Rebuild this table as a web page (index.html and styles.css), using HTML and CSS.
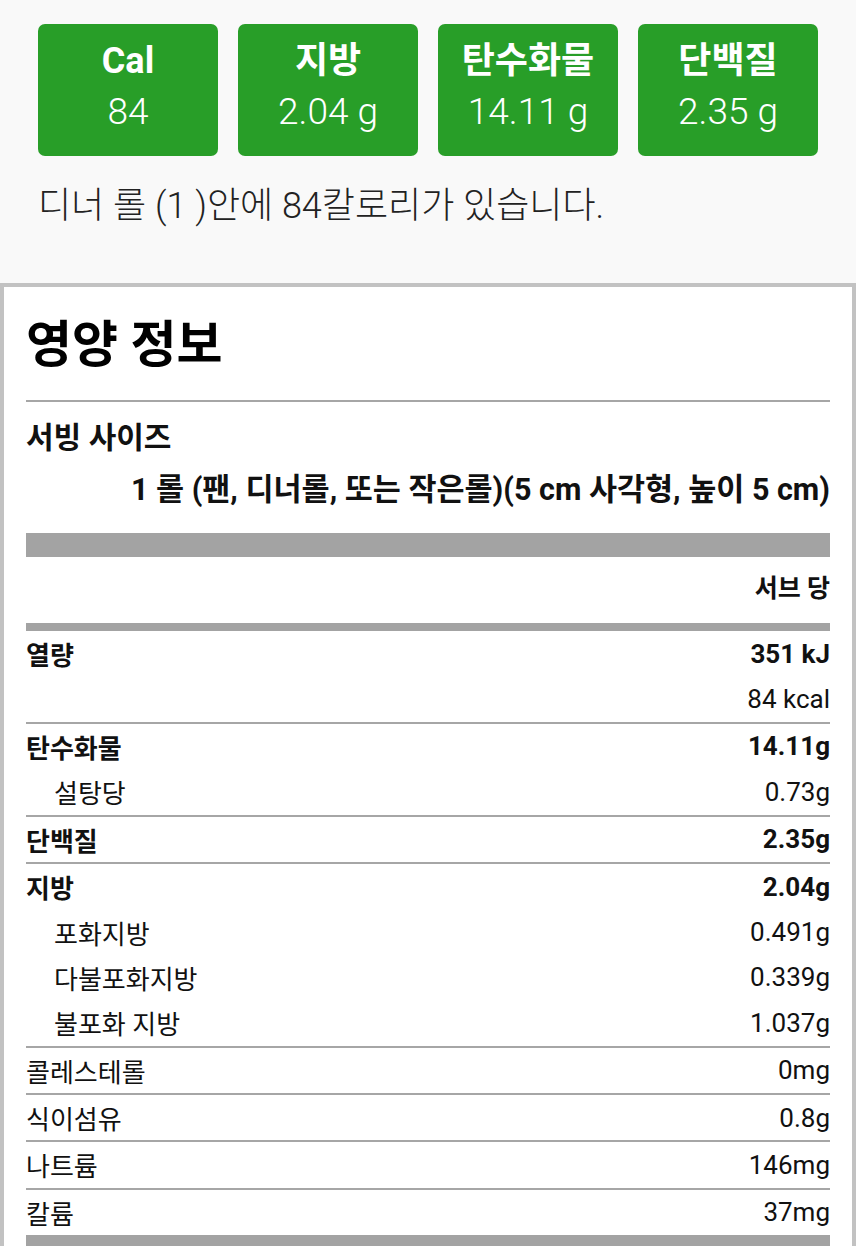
FILE: index.html
```html
<!DOCTYPE html>
<html lang="ko">
<head>
<meta charset="utf-8">
<link rel="stylesheet" href="styles.css">
</head>
<body>
<div class="top">
  <div class="cards">
    <div class="card"><div class="c-title">Cal</div><div class="c-val">84</div></div>
    <div class="card"><div class="c-title">지방</div><div class="c-val">2.04 g</div></div>
    <div class="card"><div class="c-title">탄수화물</div><div class="c-val">14.11 g</div></div>
    <div class="card"><div class="c-title">단백질</div><div class="c-val">2.35 g</div></div>
  </div>
  <p class="summary">디너 롤 (1 )안에 84칼로리가 있습니다.</p>
</div>
<div class="facts">
  <h1 class="f-title">영양 정보</h1>
  <div class="hr"></div>
  <div class="serving-label">서빙 사이즈</div>
  <div class="serving-val">1 롤 (팬, 디너롤, 또는 작은롤)(5 cm 사각형, 높이 5 cm)</div>
  <div class="bar thick"></div>
  <div class="per">서브 당</div>
  <div class="bar mid"></div>
  <div class="row b"><span>열량</span><span>351 kJ</span></div>
  <div class="row"><span></span><span>84 kcal</span></div>
  <div class="hr"></div>
  <div class="row b"><span>탄수화물</span><span>14.11g</span></div>
  <div class="row sub"><span>설탕당</span><span>0.73g</span></div>
  <div class="hr"></div>
  <div class="row b"><span>단백질</span><span>2.35g</span></div>
  <div class="hr"></div>
  <div class="row b"><span>지방</span><span>2.04g</span></div>
  <div class="row sub"><span>포화지방</span><span>0.491g</span></div>
  <div class="row sub"><span>다불포화지방</span><span>0.339g</span></div>
  <div class="row sub"><span>불포화 지방</span><span>1.037g</span></div>
  <div class="hr"></div>
  <div class="row"><span>콜레스테롤</span><span>0mg</span></div>
  <div class="hr"></div>
  <div class="row"><span>식이섬유</span><span>0.8g</span></div>
  <div class="hr"></div>
  <div class="row"><span>나트륨</span><span>146mg</span></div>
  <div class="hr"></div>
  <div class="row"><span>칼륨</span><span>37mg</span></div>
  <div class="bar end"></div>
</div>
</body>
</html>
```
FILE: styles.css
```css
* { box-sizing: border-box; }
html, body { margin: 0; padding: 0; }
body {
  background: #f9f9f9;
  font-family: Roboto, "Noto Sans CJK KR", sans-serif;
  color: #111;
  width: 856px;
  height: 1246px;
  overflow: hidden;
}
.top { padding: 24px 0 0 38px; height: 283px; }
.cards { display: flex; gap: 20px; }
.card {
  width: 180px;
  height: 132px;
  background: #289e28;
  border-radius: 7px;
  color: #fff;
  display: flex;
  flex-direction: column;
  align-items: center;
  padding-top: 13px;
}
.c-title { font-weight: 700; font-size: 36px; line-height: 48px; }
.c-val { font-weight: 300; font-size: 37px; line-height: 54px; }
.summary {
  margin: 26px 0 0 0;
  font-weight: 300;
  font-size: 36px;
  line-height: 48px;
  color: #222;
}
.facts {
  background: #fff;
  border: 4px solid #c2c2c2;
  border-bottom: none;
  padding: 0 22px;
  height: 963px;
}
.f-title {
  margin: 0;
  font-size: 50px;
  font-weight: 700;
  line-height: 64px;
  padding-top: 26px;
  padding-bottom: 23px;
  color: #000;
}
.hr { height: 2px; background: #a6a6a6; }
.serving-label { font-size: 30px; font-weight: 700; line-height: 38px; margin-top: 17px; }
.serving-val { font-size: 30.5px; font-weight: 700; line-height: 38px; text-align: right; margin-top: 14px; }
.bar { background: #a3a3a3; }
.thick { height: 24px; margin-top: 24px; }
.per { font-size: 25px; font-weight: 700; text-align: right; line-height: 36px; margin-top: 14px; margin-bottom: 16px; }
.mid { height: 8px; }
.row {
  display: flex;
  justify-content: space-between;
  align-items: center;
  height: 45.4px;
  font-size: 26px;
  font-weight: 400;
  color: #111;
}
.row.b { font-weight: 700; }
.row.sub span:first-child { padding-left: 28px; }
.end { height: 12px; }
```
